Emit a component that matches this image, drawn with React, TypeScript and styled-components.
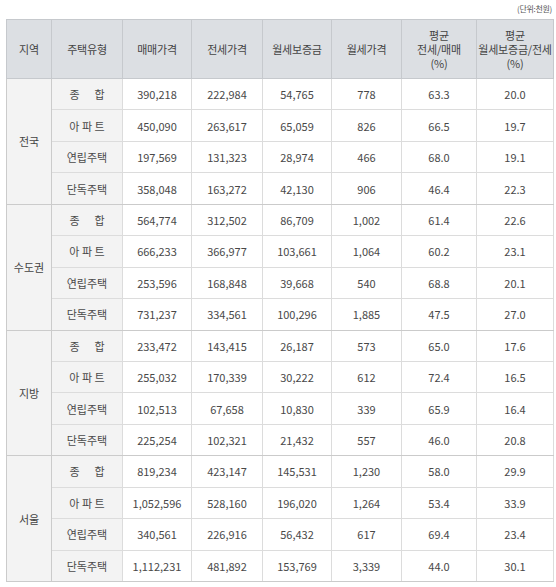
import styled, { createGlobalStyle } from "styled-components";

const GlobalStyle = createGlobalStyle`
    html, body {
        margin: 0;
        padding: 0;
        background: #fff;
    }
    body {
        font-family: "Noto Sans CJK KR", "Noto Sans", sans-serif;
        color: #4a4a4a;
    }
`;

const Wrapper = styled.div`
    width: 556px;
    padding: 3px 3px 0 6px;
    box-sizing: border-box;
`;

const Unit = styled.div`
    text-align: right;
    font-size: 8px;
    line-height: 12px;
    height: 16px;
    padding-right: 1px;
    color: #555;
    letter-spacing: -0.3px;
`;

const Table = styled.table`
    width: 547px;
    border-collapse: collapse;
    table-layout: fixed;
    font-size: 11px;
    border: 1px solid #c9c9c9;
`;

const HeadCell = styled.th`
    height: 58px;
    padding: 0;
    background: #dcdfe3;
    border: 1px solid #c6c9cd;
    font-weight: normal;
    color: #444;
    text-align: center;
    vertical-align: middle;
    letter-spacing: -0.2px;
`;

const HeadLine = styled.div`
    line-height: 14px;
    height: 14px;
    overflow: visible;
`;

const RegionCell = styled.td`
    background: #f3f3f3;
    border: 1px solid #cbcbcb;
    text-align: center;
    color: #444;
    padding: 0;
`;

const TypeCell = styled.td<{ $last: boolean }>`
    background: #f3f3f3;
    border: 1px solid #dcdcdc;
    border-bottom-color: ${(p) => (p.$last ? "#cbcbcb" : "#dcdcdc")};
    text-align: center;
    white-space: pre;
    padding: 0;
`;

const ValueCell = styled.td<{ $last: boolean }>`
    border: 1px solid #dcdcdc;
    border-bottom-color: ${(p) => (p.$last ? "#cbcbcb" : "#dcdcdc")};
    text-align: center;
    padding: 0;
    color: #484848;
`;

const Row = styled.tr`
    height: 31.45px;
`;

const widths = [45, 71, 69, 71, 69, 70, 75, 77];

const headers = [
    "지역",
    "주택유형",
    "매매가격",
    "전세가격",
    "월세보증금",
    "월세가격",
    "평균\n전세/매매\n(%)",
    "평균\n월세보증금/전세\n(%)",
];

const types = ["종      합", "아 파 트", "연립주택", "단독주택"];

const data: { region: string; rows: string[][] }[] = [
    {
        region: "전국",
        rows: [
            ["390,218", "222,984", "54,765", "778", "63.3", "20.0"],
            ["450,090", "263,617", "65,059", "826", "66.5", "19.7"],
            ["197,569", "131,323", "28,974", "466", "68.0", "19.1"],
            ["358,048", "163,272", "42,130", "906", "46.4", "22.3"],
        ],
    },
    {
        region: "수도권",
        rows: [
            ["564,774", "312,502", "86,709", "1,002", "61.4", "22.6"],
            ["666,233", "366,977", "103,661", "1,064", "60.2", "23.1"],
            ["253,596", "168,848", "39,668", "540", "68.8", "20.1"],
            ["731,237", "334,561", "100,296", "1,885", "47.5", "27.0"],
        ],
    },
    {
        region: "지방",
        rows: [
            ["233,472", "143,415", "26,187", "573", "65.0", "17.6"],
            ["255,032", "170,339", "30,222", "612", "72.4", "16.5"],
            ["102,513", "67,658", "10,830", "339", "65.9", "16.4"],
            ["225,254", "102,321", "21,432", "557", "46.0", "20.8"],
        ],
    },
    {
        region: "서울",
        rows: [
            ["819,234", "423,147", "145,531", "1,230", "58.0", "29.9"],
            ["1,052,596", "528,160", "196,020", "1,264", "53.4", "33.9"],
            ["340,561", "226,916", "56,432", "617", "69.4", "23.4"],
            ["1,112,231", "481,892", "153,769", "3,339", "44.0", "30.1"],
        ],
    },
];

const App = () => {
    return (
        <Wrapper>
            <GlobalStyle />
            <Unit>(단위:천원)</Unit>
            <Table>
                <colgroup>
                    {widths.map((w, i) => (
                        <col key={i} style={{ width: w }} />
                    ))}
                </colgroup>
                <thead>
                    <tr>
                        {headers.map((h) => (
                            <HeadCell key={h}>
                                {h.split("\n").map((line, i) => (
                                    <HeadLine key={i}>{line}</HeadLine>
                                ))}
                            </HeadCell>
                        ))}
                    </tr>
                </thead>
                <tbody>
                    {data.map((group) =>
                        group.rows.map((row, i) => {
                            const last = i === group.rows.length - 1;
                            return (
                                <Row key={group.region + i}>
                                    {i === 0 && (
                                        <RegionCell rowSpan={4}>
                                            {group.region}
                                        </RegionCell>
                                    )}
                                    <TypeCell $last={last}>{types[i]}</TypeCell>
                                    {row.map((v, j) => (
                                        <ValueCell key={j} $last={last}>
                                            {v}
                                        </ValueCell>
                                    ))}
                                </Row>
                            );
                        })
                    )}
                </tbody>
            </Table>
        </Wrapper>
    );
};

export default App;
